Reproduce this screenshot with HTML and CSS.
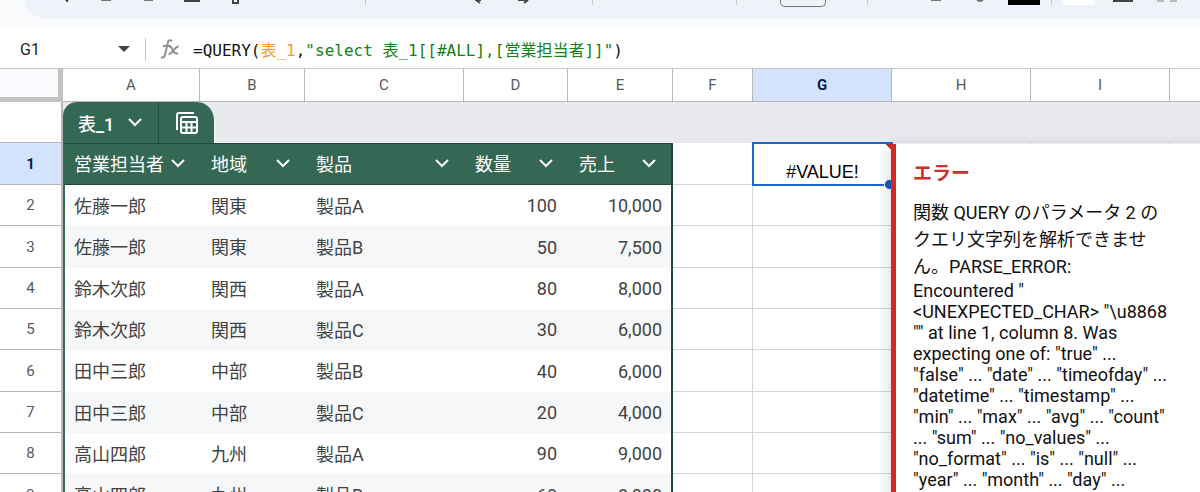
FILE: index.html
```html
<!DOCTYPE html>
<html lang="ja">
<head>
  <meta charset="UTF-8" />
  <meta name="viewport" content="width=device-width, initial-scale=1.0"/>
  <title>QUERY</title>
  <link rel="stylesheet" href="styles.css">
</head>
<body>

  <header class="top">
    <div class="toolbar">
      <div class="group group-file">
        <button type="button" aria-label="検索"><svg width="20" height="6"><path d="M13 0l2 1.500" stroke="#333" stroke-width="2"/></svg></button>
        <button type="button" aria-label="元に戻す"><svg width="20" height="6"><path d="M5 0h10" stroke="#777" stroke-width="2"/></svg></button>
        <button type="button" aria-label="やり直し"><svg width="20" height="6"><path d="M5 0h9" stroke="#777" stroke-width="2"/></svg></button>
        <button type="button" aria-label="印刷"><svg width="20" height="6"><path d="M3 0v1h14V0" fill="none" stroke="#444" stroke-width="2"/></svg></button>
        <button type="button" aria-label="書式を貼り付け"><svg width="20" height="6"><path d="M8 0v3h5V0" fill="none" stroke="#444" stroke-width="2"/></svg></button>
      </div>
      <div class="group group-history">
        <button type="button" aria-label="小数点以下を減らす"><svg width="20" height="6"><path d="M6 0l4 3M5 0h6" fill="none" stroke="#444" stroke-width="2"/></svg></button>
        <button type="button" aria-label="小数点以下を増やす"><svg width="20" height="6"><path d="M14 0l-4 3M4 0h9" fill="none" stroke="#444" stroke-width="2"/></svg></button>
      </div>
      <div class="group group-font"></div>
      <div class="group group-size"><span class="size-box"></span></div>
      <div class="group group-text">
        <button type="button" aria-label="斜体"><svg width="20" height="6"><path d="M5 0h10" stroke="#777" stroke-width="2"/></svg></button>
        <button type="button" aria-label="取り消し線"><svg width="20" height="6"><path d="M7 0q3 2 6 0" fill="none" stroke="#777" stroke-width="2"/></svg></button>
        <button type="button" aria-label="テキストの色"><svg width="32" height="6"><path d="M0 0h32v5H0z"/></svg></button>
      </div>
      <div class="group group-cell">
        <button type="button" aria-label="塗りつぶしの色"><svg width="32" height="6"><path d="M0 0h32v5H0z" fill="#fff"/></svg></button>
        <button type="button" aria-label="枠線"><svg width="20" height="6"><path d="M0 0h20v2H0z" fill="#444"/></svg></button>
        <button type="button" aria-label="セルを結合"><svg width="20" height="6"><path d="M0 0h7v2H0zM13 0h7v2h-7z" fill="#b5b8bc"/></svg></button>
      </div>
    </div>
  </header>

  <div class="formula-bar">
    <input type="text" class="name-box" aria-label="名前ボックス" value="G1">
    <button type="button" class="name-arrow" aria-label="名前の一覧"><svg width="12" height="6"><path d="M0 0h12L6 6z" fill="#444"/></svg></button>
    <svg class="fx" width="20" height="22" viewBox="0 0 20 22" fill="none" stroke="#929292" stroke-width="2">
      <path d="M12 3C9 1 8 3 7.500 6L5 17C4.500 19.500 3 20 1 19M3 8h8"/>
      <path d="M9 9C13 7 12 17 18 15.500M18.500 8.500C15 8 13 16 8.500 16"/>
    </svg>
    <div class="formula" role="textbox" aria-label="数式">=QUERY(<span class="ref">表_1</span>,<span class="str">"select 表_1[[#ALL],[営業担当者]]"</span>)</div>
  </div>

  <main class="sheet">
    <table class="grid">
      <colgroup>
        <col class="col-num"><col class="col-a"><col class="col-b"><col class="col-c"><col class="col-d"><col class="col-e">
        <col class="col-f"><col class="col-wide"><col class="col-wide"><col class="col-wide"><col class="col-wide">
      </colgroup>
      <thead>
        <tr>
          <th class="corner"></th>
          <th>A</th><th>B</th><th>C</th><th>D</th><th>E</th><th>F</th>
          <th class="active">G</th><th>H</th><th>I</th><th></th>
        </tr>
      </thead>
      <tbody>
        <tr class="tab-row">
          <th></th>
          <td colspan="10">
            <div class="tab">
              <button type="button" class="tab-name">表_1 <svg width="14" height="9"><path d="M1 1l6 6 6-6"/></svg></button>
              <button type="button" class="tab-tool" aria-label="表のツール">
                <svg width="24" height="24" viewBox="0 0 24 24">
                  <path d="M2 19V4q0-2 2-2h15"/>
                  <rect x="6" y="6" width="16" height="16" rx="2"/>
                  <path d="M6 11h16" stroke-width="3"/>
                  <path d="M6 16.500h16M11.500 11v11M16.500 11v11"/>
                </svg>
              </button>
            </div>
          </td>
        </tr>
        <tr class="head-row">
          <th class="active">1</th>
          <td class="t first"><div class="field">営業担当者<button type="button" aria-label="営業担当者のメニュー"><svg width="14" height="9"><path d="M1 1l6 6 6-6"/></svg></button></div></td>
          <td class="t"><div class="field">地域<button type="button" aria-label="地域のメニュー"><svg width="14" height="9"><path d="M1 1l6 6 6-6"/></svg></button></div></td>
          <td class="t"><div class="field">製品<button type="button" aria-label="製品のメニュー"><svg width="14" height="9"><path d="M1 1l6 6 6-6"/></svg></button></div></td>
          <td class="t"><div class="field">数量<button type="button" aria-label="数量のメニュー"><svg width="14" height="9"><path d="M1 1l6 6 6-6"/></svg></button></div></td>
          <td class="t last"><div class="field">売上<button type="button" aria-label="売上のメニュー"><svg width="14" height="9"><path d="M1 1l6 6 6-6"/></svg></button></div></td>
          <td></td><td class="selected">#VALUE!<span class="handle"></span></td><td></td><td></td><td></td>
        </tr>
        <tr><th>2</th><td class="t first">佐藤一郎</td><td class="t">関東</td><td class="t">製品A</td><td class="t num">100</td><td class="t num last">10,000</td><td></td><td></td><td></td><td></td><td></td></tr>
        <tr><th>3</th><td class="t first">佐藤一郎</td><td class="t">関東</td><td class="t">製品B</td><td class="t num">50</td><td class="t num last">7,500</td><td></td><td></td><td></td><td></td><td></td></tr>
        <tr><th>4</th><td class="t first">鈴木次郎</td><td class="t">関西</td><td class="t">製品A</td><td class="t num">80</td><td class="t num last">8,000</td><td></td><td></td><td></td><td></td><td></td></tr>
        <tr><th>5</th><td class="t first">鈴木次郎</td><td class="t">関西</td><td class="t">製品C</td><td class="t num">30</td><td class="t num last">6,000</td><td></td><td></td><td></td><td></td><td></td></tr>
        <tr><th>6</th><td class="t first">田中三郎</td><td class="t">中部</td><td class="t">製品B</td><td class="t num">40</td><td class="t num last">6,000</td><td></td><td></td><td></td><td></td><td></td></tr>
        <tr><th>7</th><td class="t first">田中三郎</td><td class="t">中部</td><td class="t">製品C</td><td class="t num">20</td><td class="t num last">4,000</td><td></td><td></td><td></td><td></td><td></td></tr>
        <tr><th>8</th><td class="t first">高山四郎</td><td class="t">九州</td><td class="t">製品A</td><td class="t num">90</td><td class="t num last">9,000</td><td></td><td></td><td></td><td></td><td></td></tr>
        <tr><th>9</th><td class="t first">高山四郎</td><td class="t">九州</td><td class="t">製品B</td><td class="t num">60</td><td class="t num last">8,000</td><td></td><td></td><td></td><td></td><td></td></tr>
      </tbody>
    </table>

    <aside class="error-card">
      <h2>エラー</h2>
      <p><span class="summary">関数 QUERY のパラメータ 2 のクエリ文字列を解析できません。PARSE_ERROR:</span> Encountered " &lt;UNEXPECTED_CHAR&gt; "\u8868 "" at line 1, column 8. Was expecting one of: "true" ... "false" ... "date" ... "timeofday" ... "datetime" ... "timestamp" ... "min" ... "max" ... "avg" ... "count" ... "sum" ... "no_values" ... "no_format" ... "is" ... "null" ... "year" ... "month" ... "day" ...</p>
    </aside>
  </main>

</body>
</html>
```

FILE: styles.css
```css
* {
  box-sizing: border-box;
}

body {
  margin: 0;
  height: 100vh;
  overflow: hidden;
  display: flex;
  flex-direction: column;
  font-family: Roboto, "Noto Sans CJK JP", sans-serif;
  font-size: 18px;
  color: #434343;
  background: #fff;
}

button {
  padding: 0;
  border: none;
  background: none;
  font: inherit;
  color: inherit;
  cursor: pointer;
}

svg {
  display: block;
}

/* toolbar */
.top {
  height: 30px;
  flex: none;
  padding-left: 24px;
  background: #f9fbfd;
}

.toolbar {
  display: flex;
  height: 19px;
  background: #eff2f9;
  border-bottom-left-radius: 24px 19px;
}

.group {
  display: flex;
  flex: none;
  align-items: flex-start;
  background: linear-gradient(#c7cacf, #c7cacf) right top / 1px 5px no-repeat;
}

.group button {
  display: flex;
  justify-content: center;
  width: 44px;
}

.group-file {
  width: 342px;
  padding-left: 17px;
}

.group-file button {
  width: 43px;
}

.group-history {
  width: 227px;
  padding-left: 92px;
}

.group-font {
  width: 144px;
}

.group-size {
  width: 131px;
  justify-content: center;
}

.size-box {
  width: 46px;
  height: 7px;
  border: 1px solid #747775;
  border-top: none;
  border-radius: 0 0 5px 5px;
}

.group-text {
  width: 184px;
  justify-content: flex-end;
  padding-right: 6px;
}

.group-cell {
  padding-left: 5px;
  background: none;
}

/* formula bar */
.formula-bar {
  display: flex;
  flex: none;
  align-items: center;
  height: 39px;
  border-bottom: 1px solid #c7c7c7;
}

.name-box {
  width: 118px;
  padding: 0 0 0 20px;
  border: none;
  outline: none;
  background: none;
  font: 16px Roboto, sans-serif;
  color: #1f1f1f;
}

.name-arrow {
  width: 28px;
  height: 23px;
  border-right: 1px solid #c7c7c7;
}

.fx {
  margin: 0 13px 0 14px;
}

.formula {
  font: 16px "DejaVu Sans Mono", "Noto Sans CJK JP", monospace;
  color: #111;
  white-space: nowrap;
}

.ref {
  color: #f79a2e;
}

.str {
  color: #188018;
}

/* grid */
.sheet {
  position: relative;
  flex: 1;
  overflow: hidden;
}

.grid {
  width: 1309px;
  table-layout: fixed;
  border-collapse: separate;
  border-spacing: 0;
}

.col-num { width: 63px; }
.col-a { width: 137px; }
.col-b { width: 105px; }
.col-c { width: 159px; }
.col-d { width: 104px; }
.col-e { width: 105px; }
.col-f { width: 80px; }
.col-wide { width: 139px; }

.grid th,
.grid td {
  height: 41px;
  padding: 0;
  border: 0 solid #d6d6d6;
  border-width: 0 1px 1px 0;
  font-weight: 400;
}

.grid tbody .head-row > *,
.grid tbody tr:nth-child(3n + 4) > * {
  height: 42px;
}

.grid th {
  border-color: #b7b7b7;
  font-size: 15px;
  color: #575b5f;
}

.grid thead th {
  height: 33px;
}

.grid tbody th {
  border-right-width: 2px;
}

.grid th.active {
  background: #d3e3fd;
  font-weight: 700;
  color: #041e49;
}

.grid .corner {
  background: #f8fafd;
  border-width: 0 5px 5px 0;
  border-color: #c3c3c3;
}

.grid .tab-row td {
  padding: 0;
  border: none;
  background: #e8eaed;
}

.tab {
  display: flex;
  width: 152px;
  height: 41px;
  border-radius: 14px 18px 0 0;
  overflow: hidden;
  background: #356854;
  border-right: 1px solid #f4f6f8;
  color: #fff;
}

.tab path,
.tab rect,
.field path {
  fill: none;
  stroke: #fff;
  stroke-width: 2;
}

.tab-name {
  display: flex;
  align-items: center;
  justify-content: space-between;
  width: 96px;
  padding: 0 16px 0 15px;
  border-right: 1px solid #284e3f;
  font-weight: 500;
}

.tab-tool {
  display: flex;
  flex: 1;
  align-items: center;
  justify-content: center;
}

/* converted table */
.grid .t {
  padding: 0 11px 2px;
  border: none;
}

.grid .num {
  padding-bottom: 0;
  text-align: right;
}

.grid .first {
  border-left: 2px solid #3c6a57;
  padding-left: 9px;
}

.grid .last {
  border-right: 2px solid #1f4a3a;
  padding-right: 9px;
}

.grid tr:nth-child(even) .t {
  background: #f5f7f9;
}

.grid .head-row .t.t {
  padding-right: 15px;
  background: #356854;
  border-top: 1px solid #24493b;
  border-bottom: 1px solid #24493b;
  color: #fff;
}

.field {
  display: flex;
  align-items: center;
  justify-content: space-between;
  white-space: nowrap;
}

.grid .selected {
  position: relative;
  padding: 0 0 2px;
  border: none;
  outline: 2px solid #1967d2;
  outline-offset: -1px;
  background: linear-gradient(225deg, #c5302c 5px, transparent 5px);
  font-family: "Liberation Sans", sans-serif;
  color: #000;
  text-align: center;
  vertical-align: bottom;
}

.handle {
  position: absolute;
  right: -3px;
  bottom: -5px;
  width: 11px;
  height: 11px;
  border: 1px solid #fff;
  border-radius: 50%;
  background: #1558c0;
}

/* error popup */
.error-card {
  position: absolute;
  top: 75px;
  left: 891px;
  width: 320px;
  min-height: 100%;
  padding: 16px 42px 16px 17px;
  border-left: 5px solid #d5281f;
  background: #fff;
  box-shadow: 0 2px 12px rgba(0, 0, 0, 0.2);
  color: #111;
}

.error-card h2 {
  margin: 0 0 12px;
  font-size: 19px;
  line-height: 27px;
  color: #d03027;
}

.error-card p {
  margin: 0;
}

.summary {
  line-height: 27px;
}
```
